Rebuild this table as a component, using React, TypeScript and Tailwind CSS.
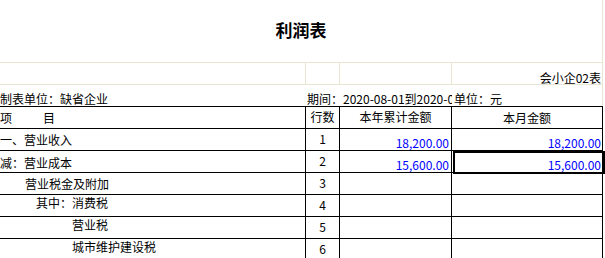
import React from "react";

const LIGHT = "border-[#e8e5d3]";

type Row = { label: string; indent: number; pt: number; n: string; y?: string; m?: string };

const rows: Row[] = [
  { label: "一、营业收入", indent: 0, pt: 5, n: "1", y: "18,200.00", m: "18,200.00" },
  { label: "减：营业成本", indent: 0, pt: 6, n: "2", y: "15,600.00", m: "15,600.00" },
  { label: "营业税金及附加", indent: 25, pt: 5, n: "3" },
  { label: "其中：消费税", indent: 36, pt: 2, n: "4" },
  { label: "营业税", indent: 72, pt: 2, n: "5" },
  { label: "城市维护建设税", indent: 72, pt: 2, n: "6" },
];

export default function App() {
  return (
    <div
      className="relative w-[605px] h-[258px] overflow-hidden bg-white text-black text-[12px] leading-none"
      style={{ fontFamily: '"Noto Sans CJK SC", "Noto Sans", sans-serif' }}
    >
      <div className="w-[603px]">
        {/* title */}
        <div className={`h-[62px] border-r ${LIGHT} pt-[21px] text-center text-[17px] font-bold leading-none`}>
          利润表
        </div>

        {/* row: form number */}
        <div className={`flex h-[22px] border-t ${LIGHT}`}>
          <div className={`w-[306px] border-r ${LIGHT}`} />
          <div className={`w-[34px] border-r ${LIGHT}`} />
          <div className={`w-[112px] border-r ${LIGHT}`} />
          <div className={`w-[151px] border-r ${LIGHT} pt-[9px] pr-[1px] text-right whitespace-nowrap`}>
            会小企02表
          </div>
        </div>

        {/* row: unit / period */}
        <div className={`flex h-[22px] border-t ${LIGHT}`}>
          <div className="w-[306px] pt-[8px] whitespace-nowrap">制表单位：缺省企业</div>
          <div className="w-[146px] overflow-hidden pt-[8px] pl-[1px] whitespace-nowrap">
            期间：2020-08-01到2020-08-31
          </div>
          <div className={`w-[151px] border-r ${LIGHT} pt-[8px] pl-[2px] whitespace-nowrap`}>单位：元</div>
        </div>

        {/* header */}
        <div className="flex h-[22px] border-t border-black">
          <div className="w-[306px] border-r border-black pt-[5px] whitespace-nowrap">
            项<span className="ml-[31px]">目</span>
          </div>
          <div className="w-[34px] border-r border-black pt-[4px] text-center whitespace-nowrap">行数</div>
          <div className="w-[112px] border-r border-black pt-[4px] text-center whitespace-nowrap">本年累计金额</div>
          <div className="w-[151px] border-r border-black pt-[5px] text-center whitespace-nowrap">本月金额</div>
        </div>

        {rows.map((r) => (
          <div key={r.n} className="flex h-[22px] border-t border-black">
            <div className="w-[306px] border-r border-black whitespace-nowrap" style={{ paddingTop: r.pt, paddingLeft: r.indent }}>
              {r.label}
            </div>
            <div className="w-[34px] border-r border-black pt-[4px] text-center">{r.n}</div>
            <div className="w-[112px] border-r border-black pt-[8px] pr-[2px] text-right text-[#0000ff] whitespace-nowrap">
              {r.y ?? ""}
            </div>
            <div className="w-[151px] border-r border-black pt-[8px] pr-[1px] text-right text-[#0000ff] whitespace-nowrap">
              {r.m ?? ""}
            </div>
          </div>
        ))}
      </div>

      {/* selection box */}
      <div className="absolute left-[453px] top-[151px] w-[152px] h-[23px] border-2 border-black pointer-events-none" />
    </div>
  );
}
